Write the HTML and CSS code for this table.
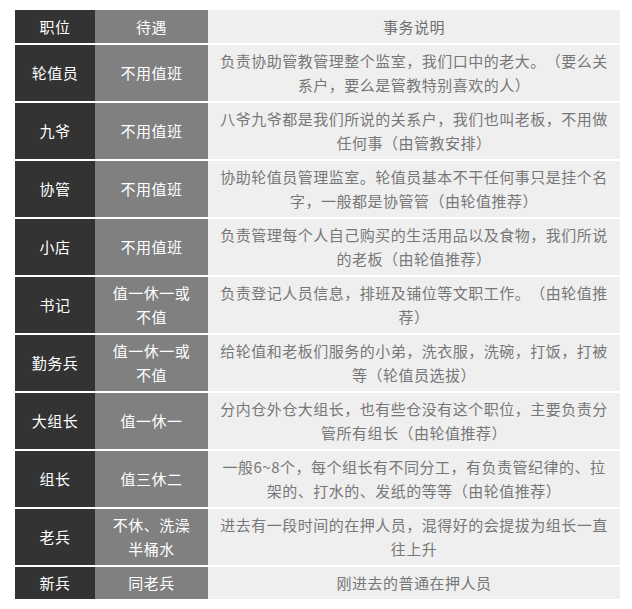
FILE: index.html
```html
<!DOCTYPE html>
<html lang="zh-CN">
<head>
<meta charset="utf-8">
<title>职位待遇</title>
<link rel="stylesheet" href="styles.css">
</head>
<body>
<div class="wrap">
<table class="duty">
  <thead>
    <tr><th class="c1">职位</th><th class="c2">待遇</th><th class="c3">事务说明</th></tr>
  </thead>
  <tbody>
    <tr><td class="c1">轮值员</td><td class="c2">不用值班</td><td class="c3">负责协助管教管理整个监室，我们口中的老大。（要么关系户，要么是管教特别喜欢的人）</td></tr>
    <tr><td class="c1">九爷</td><td class="c2">不用值班</td><td class="c3">八爷九爷都是我们所说的关系户，我们也叫老板，不用做任何事（由管教安排）</td></tr>
    <tr><td class="c1">协管</td><td class="c2">不用值班</td><td class="c3">协助轮值员管理监室。轮值员基本不干任何事只是挂个名字，一般都是协管管（由轮值推荐）</td></tr>
    <tr><td class="c1">小店</td><td class="c2">不用值班</td><td class="c3">负责管理每个人自己购买的生活用品以及食物，我们所说的老板（由轮值推荐）</td></tr>
    <tr><td class="c1">书记</td><td class="c2">值一休一或不值</td><td class="c3">负责登记人员信息，排班及铺位等文职工作。（由轮值推荐）</td></tr>
    <tr><td class="c1">勤务兵</td><td class="c2">值一休一或不值</td><td class="c3">给轮值和老板们服务的小弟，洗衣服，洗碗，打饭，打被等（轮值员选拔）</td></tr>
    <tr><td class="c1">大组长</td><td class="c2">值一休一</td><td class="c3">分内仓外仓大组长，也有些仓没有这个职位，主要负责分管所有组长（由轮值推荐）</td></tr>
    <tr><td class="c1">组长</td><td class="c2">值三休二</td><td class="c3">一般6~8个，每个组长有不同分工，有负责管纪律的、拉架的、打水的、发纸的等等（由轮值推荐）</td></tr>
    <tr><td class="c1">老兵</td><td class="c2">不休、洗澡半桶水</td><td class="c3">进去有一段时间的在押人员，混得好的会提拔为组长一直往上升</td></tr>
    <tr><td class="c1">新兵</td><td class="c2">同老兵</td><td class="c3">刚进去的普通在押人员</td></tr>
  </tbody>
</table>
</div>
</body>
</html>
```

FILE: styles.css
```css
html, body {
  margin: 0;
  padding: 0;
  background: #ffffff;
}
body {
  padding: 8px;
  font-family: "Noto Sans CJK SC", "Noto Sans", sans-serif;
}
.wrap {
  padding-left: 7px;
}
.duty {
  width: 605px;
  border-collapse: separate;
  border-spacing: 0 2px;
  table-layout: fixed;
  font-size: 15px;
  letter-spacing: 0.5px;
  line-height: 24px;
  text-spacing-trim: space-all;
}
.duty th,
.duty td {
  padding: 4px 12px;
  text-align: center;
  vertical-align: middle;
  font-weight: normal;
}
.duty thead th {
  padding-top: 4.5px;
  padding-bottom: 4.5px;
}
.c1 {
  width: 80px;
  box-sizing: border-box;
  background: #333333;
  color: #ffffff;
  padding-left: 4px !important;
  padding-right: 4px !important;
}
.c2 {
  width: 113px;
  box-sizing: border-box;
  background: #808080;
  color: #ffffff;
}
.c3 {
  background: #efefef;
  color: #777777;
}
thead .c3 {
  color: #6f6f6f;
}
```
